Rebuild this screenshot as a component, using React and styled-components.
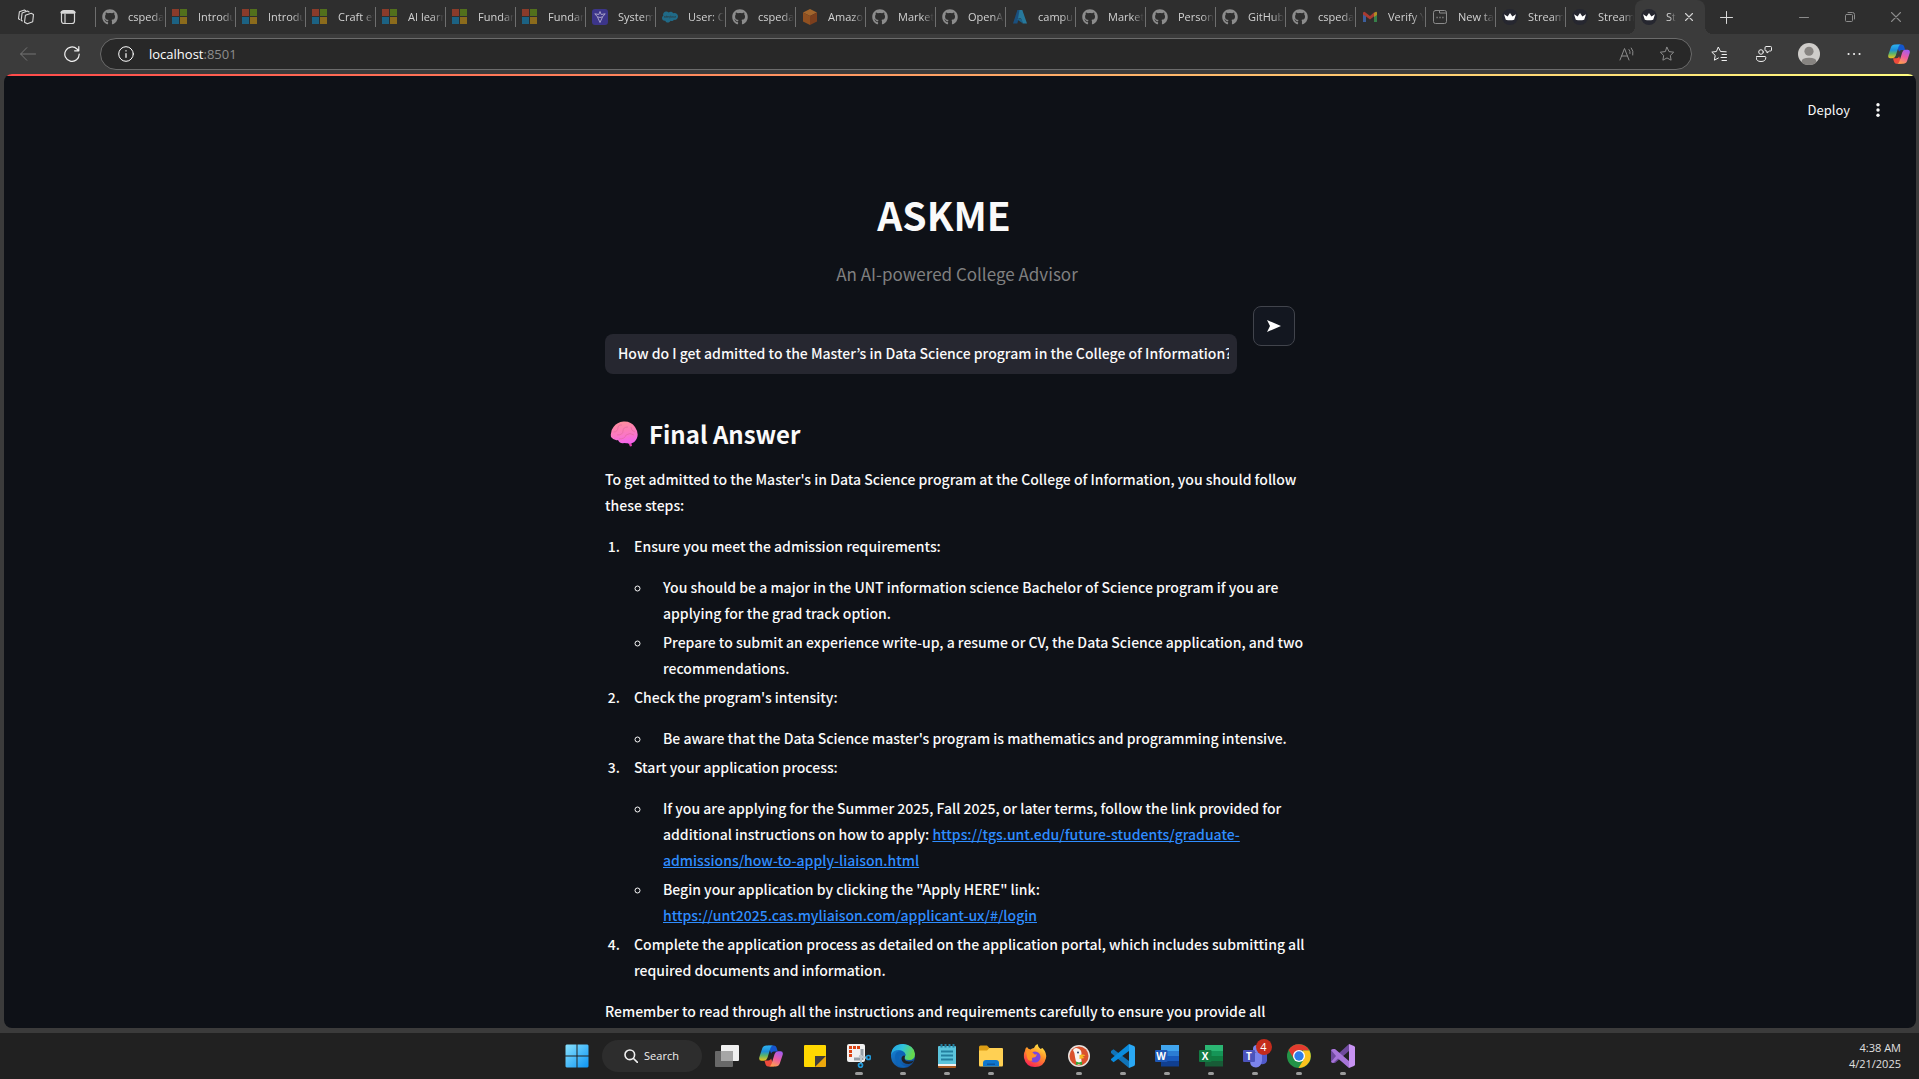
import React, { useId } from "react";
import styled, { createGlobalStyle } from "styled-components";
import { FaGithub, FaSalesforce } from "react-icons/fa";

const sourceSans = '"Source Sans Pro", "Noto Sans CJK KR", sans-serif';
const systemSans = '"Segoe UI", "Open Sans", "Noto Sans", sans-serif';

const GlobalStyle = createGlobalStyle`
  *, *::before, *::after { box-sizing: border-box; }
  body { margin: 0; background: #3b3b3b; overflow: hidden; }
  button { border: 0; padding: 0; background: none; color: inherit; font: inherit; }
  svg { display: block; flex: none; }
`;

/* ---------- Window ---------- */

const Screen = styled.div`
  display: flex;
  flex-direction: column;
  height: 100vh;
  font-family: ${systemSans};
  color: #fff;
`;

const TabBar = styled.header`
  display: flex;
  flex: none;
  height: 34px;
  background: #2e2e2e;
`;

const TabBarActions = styled.div`
  display: flex;
  width: 95px;
  padding-left: 5px;
`;

const BarButton = styled.button`
  display: flex;
  align-items: center;
  justify-content: center;
  width: ${(p) => p.$width || 42}px;
  height: 34px;
  color: ${(p) => p.$color || "#d8d8d8"};
`;

const TabList = styled.nav`
  display: flex;
  flex: 1;
  min-width: 0;
`;

const Tab = styled.button`
  position: relative;
  display: flex;
  align-items: center;
  gap: 10px;
  width: 70px;
  padding: 0 1px 0 7px;
  color: #d2d2d2;
  font-size: 11px;
  line-height: 16px;

  &::before {
    content: "";
    position: absolute;
    left: 0;
    top: 7px;
    width: 1px;
    height: 20px;
    background: #6e6e6e;
  }
`;

const TabIcon = styled.span`
  display: flex;
  align-items: center;
  justify-content: center;
  flex: none;
  width: 16px;
  height: 16px;
  color: #8c8c8c;
`;

const TabTitle = styled.span`
  flex: 1;
  overflow: hidden;
  white-space: nowrap;
  text-align: left;
  mask-image: linear-gradient(90deg, #000 calc(100% - ${(p) => p.$fade || 12}px), transparent);
`;

const ActiveTab = styled.div`
  position: relative;
  display: flex;
  align-items: center;
  gap: 9px;
  width: 70px;
  padding: 0 12px 0 6px;
  border-radius: 8px 8px 0 0;
  background: #3b3b3b;
  color: #d2d2d2;
  font-size: 11px;
  line-height: 16px;

  &::before, &::after {
    content: "";
    position: absolute;
    bottom: 0;
    width: 8px;
    height: 8px;
  }
  &::before {
    left: -8px;
    background: radial-gradient(circle at 0 0, #2e2e2e 8px, #3b3b3b 8px);
  }
  &::after {
    right: -8px;
    background: radial-gradient(circle at 100% 0, #2e2e2e 8px, #3b3b3b 8px);
  }
`;

const WindowControls = styled.div`
  display: flex;
`;

const Toolbar = styled.div`
  display: flex;
  align-items: center;
  flex: none;
  height: 40px;
  padding: 0 2px 0 6px;
`;

const AddressBar = styled.form`
  display: flex;
  align-items: center;
  flex: 1;
  height: 32px;
  margin: 0 9px 0 6px;
  padding: 0 4px 0 17px;
  border: 1px solid #6b6b6b;
  border-radius: 16px;
  background: #282828;
`;

const Address = styled.div`
  flex: 1;
  margin-left: 15px;
  color: #8d8d8d;
  font-size: 13px;
  line-height: 20px;
`;

const Host = styled.span`
  color: #fff;
`;

const ToolbarActions = styled.div`
  display: flex;
  gap: 9px;
`;

/* ---------- Page ---------- */

const Page = styled.main`
  flex: 1;
  min-height: 0;
  margin: 0 3px 0 4px;
  overflow: hidden;
  border-radius: 8px;
  background: #0e1117;
  color: #fafafa;
  font-family: ${sourceSans};
  font-size: 14px;
  font-weight: 500;
  line-height: 26px;
`;

const Decoration = styled.div`
  height: 2px;
  background: linear-gradient(90deg, #ff4b4b, #fffd80);
`;

const PageHeader = styled.div`
  display: flex;
  align-items: center;
  justify-content: flex-end;
  gap: 20px;
  height: 68px;
  padding-right: 30px;
`;

const DeployButton = styled.button`
  font-size: 13px;
  font-weight: 400;
  line-height: 20px;
`;

const Scroller = styled.div`
  padding-right: 6px;
`;

const Column = styled.div`
  max-width: 704px;
  margin: 0 auto;
  padding-top: 44px;
`;

const Title = styled.h1`
  margin: 0;
  padding-right: 26px;
  font-size: 39px;
  font-weight: 700;
  line-height: 53px;
  text-align: center;
`;

const Subtitle = styled.p`
  margin: 19px 0 18px;
  color: #808080;
  font-size: 17px;
  font-weight: 400;
  line-height: 28px;
  text-align: center;
`;

const Ask = styled.form`
  display: flex;
  gap: 16px;
  height: 68px;
`;

const Question = styled.input`
  flex: 1;
  align-self: flex-end;
  min-width: 0;
  height: 40px;
  padding: 0 8px 2px 13px;
  border: 0;
  border-radius: 8px;
  outline: 0;
  background: #262730;
  color: #fafafa;
  font: inherit;
`;

const SendSlot = styled.div`
  width: 56px;
`;

const SendButton = styled.button`
  display: flex;
  align-items: center;
  justify-content: center;
  width: 42px;
  height: 40px;
  border: 1px solid #41444c;
  border-radius: 8px;
  background: #131720;
`;

const AnswerTitle = styled.h3`
  display: flex;
  align-items: center;
  gap: 11px;
  margin: 43px 0 15px;
  padding-left: 5px;
  font-size: 24px;
  font-weight: 600;
  line-height: 34px;
`;

const Paragraph = styled.p`
  margin: 0 0 15px;
`;

const Steps = styled.ol`
  margin: 0 0 15px;
  padding: 0;
`;

const Details = styled.ul`
  margin: 15px 0 0;
  padding: 0;
  list-style: circle;
`;

const Item = styled.li`
  margin: 3px 0 0 18px;
  padding-left: 11px;
  &:first-child { margin-top: 0; }
`;

const Link = styled.a`
  color: #2f8dff;
  text-decoration: underline;
`;

/* ---------- Taskbar ---------- */

const Taskbar = styled.footer`
  display: grid;
  grid-template-columns: 1fr auto 1fr;
  flex: none;
  height: 46px;
  margin-top: 5px;
  background: #212121;
`;

const Dock = styled.div`
  grid-column: 2;
  display: flex;
  align-items: center;
`;

const DockButton = styled.button`
  position: relative;
  display: flex;
  align-items: center;
  justify-content: center;
  width: 44px;
  height: 46px;

  &::after {
    content: "";
    position: absolute;
    bottom: 4px;
    width: ${(p) => p.$mark || 0}px;
    height: 3px;
    border-radius: 2px;
    background: #9b9b9b;
  }
`;

const Search = styled.button`
  display: flex;
  align-items: center;
  justify-content: center;
  gap: 6px;
  width: 100px;
  height: 32px;
  margin: 0 3px;
  border-radius: 16px;
  background: #2d2d2d;
  color: #f0f0f0;
  font-size: 11px;
  font-weight: 500;
  line-height: 16px;
`;

const Badge = styled.span`
  position: absolute;
  top: 6px;
  right: 5px;
  width: 16px;
  height: 16px;
  border-radius: 8px;
  background: #c42b1c;
  font-size: 11px;
  line-height: 16px;
  text-align: center;
`;

const Clock = styled.time`
  justify-self: end;
  align-self: center;
  padding-right: 18px;
  color: #e0e0e0;
  font-size: 11px;
  line-height: 16px;
  text-align: right;
`;

/* ---------- Icons ---------- */

const Line = ({ size = 16, box = 16, width = 1, children }) => (
  <svg width={size} height={size} viewBox={`0 0 ${box} ${box}`} fill="none" stroke="currentColor" strokeWidth={width} strokeLinecap="round" strokeLinejoin="round" aria-hidden="true">
    {children}
  </svg>
);

const Art = ({ size = 24, box = 24, children }) => (
  <svg width={size} height={size} viewBox={`0 0 ${box} ${box}`} aria-hidden="true">{children}</svg>
);

const WorkspacesIcon = () => (
  <Line width={1.1}>
    <path d="m7.400 6.200 5.800-2 2.300 1.200-.8 7.400-5.400 2-2.800-1.600z" />
    <path d="m4.300 12-1.100-.700.900-7.400 5.400-1.900 1.600 1" />
    <path d="m1.700 10.400-1.200-.7.900-7 5-1.700 1.300.7" />
  </Line>
);
const TabPanelIcon = () => (
  <Line width={1.2}><rect x="1.500" y="1.500" width="13" height="13" rx="2.500" /><path d="M2 3.200h12" strokeWidth="3" /><path d="M5 5v9" /></Line>
);
const CloseIcon = ({ size = 8 }) => <Line size={size} box={8} width={1.1}><path d="m.5.5 7 7m0-7-7 7" /></Line>;

const MicrosoftIcon = () => (
  <Art size={16} box={16}>
    <path fill="#8a3b2a" d="M0 0h7v7H0z" /><path fill="#52701c" d="M8 0h7v7H8z" />
    <path fill="#1c6283" d="M0 8h7v7H0z" /><path fill="#8b6b1c" d="M8 8h7v7H8z" />
  </Art>
);
const SystemIcon = () => (
  <Art size={16} box={16}>
    <rect width="16" height="16" rx="3" fill="#3c3589" />
    <path fill="none" stroke="#a7a1c8" strokeWidth="1" strokeLinejoin="round" d="m8 2.500 1.200 3 4-.7-2.600 3L8 13.500 5.400 7.800l-2.600-3 4 .7zM5.400 7.800 8 8.500l2.600-.700" />
  </Art>
);
const AmazonIcon = () => (
  <Art size={16} box={16}>
    <path fill="#a2652c" d="m8 0 7 3.500L8 7 1 3.500z" /><path fill="#905020" d="M1 3.500 8 7v9l-7-3.500z" /><path fill="#7c3f1d" d="m15 3.500-7 3.500v9l7-3.500z" />
  </Art>
);
const AzureIcon = () => (
  <Art size={16} box={16}>
    <path fill="#1a4f7d" d="M5.400 1h4.200L5.300 14.500H1z" /><path fill="#27789b" d="M7.500 1h2.800L15 14.500h-4.200L9 9.500H6z" /><path fill="#1c628b" d="M4.500 10h5l1.500 4.500z" />
  </Art>
);
const GmailIcon = () => (
  <Art size={16} box={16}>
    <path fill="#3c5e9c" d="M1 4h3v9H1z" /><path fill="#378049" d="M12 6h3v7h-3z" /><path fill="#a93a31" d="m1 3.500 1.500-.8L8 7l4.500-4v4L8 10.500 4 7.500 1 5.500z" /><path fill="#b08c25" d="M12 4q3-2.500 3 0v2l-3 2z" />
  </Art>
);
const NewTabIcon = () => (
  <Line size={16}><rect x="1.500" y="1.500" width="13" height="13" rx="2" /><path d="M7.500 1.500V4h7" /><path d="M4.500 8.500h1.200m1.700 0h1.200m1.700 0h1.200" strokeWidth="1.600" strokeLinecap="butt" /></Line>
);
const CrownIcon = () => (
  <Art size={16} box={16}>
    <circle cx="8" cy="8" r="8" fill="#262730" /><path fill="#fff" d="m2 5.200 3.600 2.300L8 4l2.400 3.500L14 5.200l-1.800 5.500q-4.200 1-8.400 0z" />
  </Art>
);

const CopilotIcon = ({ size = 24 }) => {
  const id = useId();
  return (
    <Art size={size}>
      <defs>
        <linearGradient id={`${id}a`} x1="0" y1="0" x2="0" y2="1"><stop stopColor="#2fb2ee" /><stop offset=".4" stopColor="#1c8ed8" /><stop offset=".65" stopColor="#57b36d" /><stop offset="1" stopColor="#f2c31b" /></linearGradient>
        <linearGradient id={`${id}b`} x1=".7" y1="0" x2=".3" y2="1"><stop stopColor="#a45cf0" /><stop offset=".5" stopColor="#ee5da0" /><stop offset="1" stopColor="#ffa04e" /></linearGradient>
      </defs>
      <path fill="#1456ce" d="M9 1.500h6q1.800 0 2.500 2l1.300 4h-4q-2 0-2.700 2z" />
      <path fill="#ee4a3b" d="M15 22.500H9q-1.700 0-2.400-2l-1.200-4h4q2 0 2.700-2z" />
      <path fill={`url(#${id}a)`} d="M7.500 1.500H14q-1.800.2-2.500 2.500L8.400 14q-.9 2.700-3.500 2.700H2.500q-3 0-2.200-3.500L3.200 4.500q1-3 4.300-3z" />
      <path fill={`url(#${id}b)`} d="M16.500 22.500H10q1.800-.2 2.500-2.500L15.600 10q.9-2.700 3.500-2.700h2.400q3 0 2.200 3.500l-2.900 8.700q-1 3-4.300 3z" />
    </Art>
  );
};

const starPath = "m8 1.300 2 4.300 4.700.6-3.400 3.300.8 4.700L8 11.900l-4.100 2.300.8-4.700L1.300 6.200 6 5.600z";

const StartIcon = () => (
  <Art>
    <defs><linearGradient id="start" x1="0" y1="0" x2="24" y2="24" gradientUnits="userSpaceOnUse"><stop stopColor="#8be3fd" /><stop offset="1" stopColor="#0a93f5" /></linearGradient></defs>
    <path fill="url(#start)" d="M.5 1.500 1.500.5h10v11h-11zM12.500.5h10l1 1v10h-11zM.5 12.500h11v11h-10l-1-1zM12.500 12.500h11v10l-1 1h-10z" />
  </Art>
);
const TaskViewIcon = () => (
  <Art><rect x="6" y="1" width="18" height="16" rx="1" fill="#f0f0f0" /><rect y="7" width="18" height="16" rx="1" fill="#686868" /><path fill="#a6a6a6" d="M6 7h12v10H6z" /></Art>
);
const StickyIcon = () => (
  <Art><path fill="#ffd800" d="M1 2q0-1 1-1h20q1 0 1 1v10L12 23H2q-1 0-1-1z" /><path fill="#3f3d3d" d="M12 12h11L12 23z" /><path fill="#eda80c" d="M23 12v10q0 1-1 1H12z" /></Art>
);
const SnipIcon = () => (
  <Art>
    <rect width="18" height="18" rx="2" fill="#f1f1f1" /><path fill="none" stroke="#dc4313" strokeWidth="3" strokeDasharray="3 1" d="M3.500 13V3.500H14" />
    <path fill="none" stroke="#979fa6" strokeWidth="3" d="M15 5v11m-8-1h8" />
    <path stroke="#bfc7cc" strokeWidth="2" d="m12 12 8 2M14 11v8" /><circle cx="21.500" cy="13.500" r="2" fill="none" stroke="#2099da" strokeWidth="1.700" /><circle cx="13.500" cy="21.300" r="2" fill="none" stroke="#2099da" strokeWidth="1.700" />
  </Art>
);
const EdgeIcon = () => (
  <Art>
    <defs>
      <linearGradient id="edgeTop" x1="0" x2="1" y2=".3"><stop stopColor="#239ee4" /><stop offset=".5" stopColor="#2fc3dc" /><stop offset="1" stopColor="#65d94c" /></linearGradient>
      <linearGradient id="edgeBase" x1="0" x2=".8" y2="1"><stop stopColor="#1688dd" /><stop offset="1" stopColor="#114a95" /></linearGradient>
    </defs>
    <circle cx="12" cy="12" r="12" fill="url(#edgeBase)" />
    <path fill="url(#edgeTop)" d="M0 11Q1 0 12 0q11 1 12 10 0 6-6 6-6-.3-4-3.500 1-1.500 0-3Q12 6 8 6 2 6 0 11z" />
    <path fill="#0c64b8" d="M4 13q0-6 6-6 4 .5 4.500 4l-1 2q-1-2.500-3.500-2-3.500 2-1 7 3 5 8 4.500Q5 26 4 13z" />
    <path fill="#212121" d="M14 12q-2 5 4 5.500 3 0 5-1-1.500 3-5 3.500-7 0-7.500-5 0-3.500 3-3.500z" />
  </Art>
);
const NotepadIcon = () => (
  <Art>
    <rect x="3" y="2" width="18" height="21" rx="1" fill="#5bc4dc" /><path fill="#a95a21" d="M3 21h18v2q0 1-1 1H4q-1 0-1-1z" /><path fill="#f1f1f1" d="M3 20h18v2H3z" />
    <path stroke="#237f9f" strokeWidth="2" d="M6.500 0v3.500m4-3.500v3.500m4-3.500v3.500m4-3.500v3.500M6 7.500h12M6 11.500h12M6 15.500h12" />
  </Art>
);
const ExplorerIcon = () => (
  <Art>
    <path fill="#dc9d14" d="M0 3q0-1.500 1.500-1.500H8L10.500 4H22v5H0z" /><path fill="#ffd053" d="M0 6.500h8L10.500 4H23q1 0 1 1v16q0 1.500-1 1.500H1q-1 0-1-1.500z" />
    <path fill="#0f77cd" d="M4 22.500V19q0-3 3-3h10q3 0 3 3v3.500z" /><path fill="#0c559d" d="M8 19.500h8v1.500H8z" />
  </Art>
);
const FirefoxIcon = () => (
  <Art>
    <defs><linearGradient id="fox" x1=".8" x2=".3" y2="1"><stop stopColor="#fff04a" /><stop offset=".45" stopColor="#ff9328" /><stop offset="1" stopColor="#fb2055" /></linearGradient></defs>
    <path fill="url(#fox)" d="M4 3q1 2 3.500 2.500Q9 4 11 4q1-3 3.500-4 .5 3 3 5l2-1q4.500 5 3.500 10-2 9-11 9T1 14Q.5 9 2 7q0-3 2-4z" />
    <circle cx="12" cy="13" r="5.500" fill="#7947de" /><path fill="#ff9425" d="M3 7q5-1 8 3 1.500 1 3 0-1 4-4 3.500-2 1-.5 3Q5 18 4 13z" />
  </Art>
);
const DuckIcon = () => (
  <Art>
    <circle cx="12" cy="12" r="11" fill="#e9e2df" /><circle cx="12" cy="12" r="9.500" fill="#da522c" /><path fill="#f8f6f4" d="M6 6q2-3 5-1.500 3.500 1 3.500 5l-.5 4 1 6q-3 2-5.500.5L8 13q0-4-2-7z" />
    <path fill="#f6ba23" d="M12.500 11q4-1 6 .5l-3 1 2 1.500-5 1z" /><path fill="#37a635" d="m9 17.500 3 1 3-1v3.500l-3-1-3 1z" /><circle cx="11" cy="8.500" r="1" fill="#274169" />
  </Art>
);
const VSCodeIcon = () => (
  <Art><path fill="#1174b8" d="m0 7 2.500-1.800L18 17v7L0 9z" /><path fill="#0a8bdc" d="m0 16 2.500 2.300L18 7V0L0 15z" /><path fill="#2aa8f4" d="m18 0 5 2q1 .5 1 2v16q0 1.500-1 2l-5 2z" /></Art>
);
const OfficeIcon = ({ letter, tones }) => (
  <Art>
    <path fill={tones[0]} d="M6 1h18v6H6z" /><path fill={tones[1]} d="M6 7h18v5H6z" /><path fill={tones[2]} d="M6 12h18v5H6z" /><path fill={tones[3]} d="M6 17h18v5.500H6z" />
    <rect y="6" width="12.500" height="12" rx="1" fill={tones[4]} />
    <text x="6" y="16" fill="#fff" fontSize="10" fontWeight="700" textAnchor="middle">{letter}</text>
  </Art>
);
const TeamsIcon = () => (
  <Art>
    <circle cx="14" cy="5" r="4" fill="#7b83eb" /><path fill="#5059c9" d="M17 9h7v8q-2 4-6 3z" /><path fill="#7b83eb" d="M7 9h12v8q-1 6-6 6.500Q7 23 7 17z" />
    <rect y="6" width="12" height="12" rx="1" fill="#4b53bc" /><text x="6" y="15.500" fill="#fff" fontSize="10" fontWeight="700" textAnchor="middle">T</text>
  </Art>
);
const ChromeIcon = () => (
  <Art>
    <circle cx="12" cy="12" r="12" fill="#239447" /><path fill="#e33b2e" d="M1.600 6A12 12 0 0 1 22.400 6.500H12L7 15z" /><path fill="#fcc31e" d="M22.400 6.500A12 12 0 0 1 11.500 24L17 15l-1-8.500z" />
    <circle cx="12" cy="12" r="6" fill="#fff" /><circle cx="12" cy="12" r="4.700" fill="#2f7de9" />
  </Art>
);
const VisualStudioIcon = () => (
  <Art><path fill="#6e4a9c" d="m0 6 2-1 5 5 11-10v7L4 19l-2 0-2-1z" /><path fill="#a775d8" d="m0 18 2 1 5-4.500L18 24v-7L4 5 2 5 0 6l5 6z" /><path fill="#c792f2" d="m18 0 5 2 1 1v18l-1 1-5 2z" /></Art>
);

const BrainIcon = () => (
  <svg width="28" height="26" viewBox="0 0 28 26" aria-hidden="true">
    <defs><linearGradient id="brain" x1=".4" x2=".6" y2="1"><stop stopColor="#ff8e9c" /><stop offset=".6" stopColor="#fb77c5" /><stop offset="1" stopColor="#f464ee" /></linearGradient></defs>
    <path fill="#dd3fae" d="m17 21 4-1 1 5-2 .500q-.5-2.500-3-4.500z" />
    <path fill="url(#brain)" d="M1 16Q0 10 3.500 6 7 1 13.500.500 21 0 25 6q4 6 2 11-2 5-7 5.500l-6-.5q-4 1-6-3-4 1-7-3z" />
    <path fill="none" stroke="#e56a9f" strokeWidth=".7" d="M3.500 11Q8 11 8 6q1-3 4-2M7 14q6 0 6-4t5-4m-9 12q6 0 7-4 4-3 8 0m-3-8q0 4 4 5" />
  </svg>
);

/* ---------- Content ---------- */

const tabs = [
  ["cspeda", "github"], ["Introdu", "ms"], ["Introdu", "ms"], ["Craft ef", "ms"], ["AI learn", "ms"], ["Fundar", "ms"], ["Fundar", "ms"],
  ["System", "system"], ["User: C", "cloud"], ["cspeda", "github"], ["Amazo", "amazon"], ["Market", "github"], ["OpenA", "github"],
  ["campu", "azure"], ["Market", "github"], ["Person", "github"], ["GitHub", "github"], ["cspeda", "github"], ["Verify Y", "gmail"],
  ["New ta", "newtab"], ["Stream", "crown"], ["Stream", "crown"],
];

const favicons = {
  github: <FaGithub size={16} />, ms: <MicrosoftIcon />, system: <SystemIcon />, cloud: <FaSalesforce size={16} color="#206a87" />,
  amazon: <AmazonIcon />, azure: <AzureIcon />, gmail: <GmailIcon />, newtab: <NewTabIcon />, crown: <CrownIcon />,
};

const apps = [
  ["Task view", <TaskViewIcon />], ["Copilot", <CopilotIcon />], ["Sticky Notes", <StickyIcon />], ["Snipping Tool", <SnipIcon />, 8],
  ["Edge", <EdgeIcon />, 6], ["Notepad", <NotepadIcon />, 6], ["File Explorer", <ExplorerIcon />, 6], ["Firefox", <FirefoxIcon />],
  ["DuckDuckGo", <DuckIcon />, 6], ["Visual Studio Code", <VSCodeIcon />, 6],
  ["Word", <OfficeIcon letter="W" tones={["#41a5ee", "#2b7cd3", "#185abd", "#103f91", "#1d57b5"]} />, 6],
  ["Excel", <OfficeIcon letter="X" tones={["#2bb673", "#159557", "#107c41", "#185c37", "#137b43"]} />, 6],
  ["Teams", <TeamsIcon />, 6, "4"], ["Chrome", <ChromeIcon />, 6], ["Visual Studio", <VisualStudioIcon />, 6],
];

function Browser() {
  return (
    <>
      <TabBar>
        <TabBarActions>
          <BarButton aria-label="Workspaces"><WorkspacesIcon /></BarButton>
          <BarButton aria-label="Tab actions"><TabPanelIcon /></BarButton>
        </TabBarActions>
        <TabList aria-label="Tabs">
          {tabs.map(([title, icon], i) => (
            <Tab key={i}><TabIcon>{favicons[icon]}</TabIcon><TabTitle>{title}</TabTitle></Tab>
          ))}
          <ActiveTab>
            <TabIcon><CrownIcon /></TabIcon><TabTitle $fade={6}>St</TabTitle>
            <button aria-label="Close tab"><CloseIcon /></button>
          </ActiveTab>
          <BarButton aria-label="New tab"><Line size={13} box={13}><path d="M6.500.500v12M.5 6.500h12" /></Line></BarButton>
        </TabList>
        <WindowControls>
          <BarButton $width={46} $color="#8c8c8c" aria-label="Minimize"><Line size={10} box={10}><path d="M.5 5.500h9" /></Line></BarButton>
          <BarButton $width={46} $color="#8c8c8c" aria-label="Restore"><Line size={10} box={10}><rect x=".5" y="2.500" width="7" height="7" rx="1" /><path d="M3 .5h4.500q2 0 2 2V7" /></Line></BarButton>
          <BarButton $width={46} $color="#8c8c8c" aria-label="Close"><CloseIcon size={10} /></BarButton>
        </WindowControls>
      </TabBar>
      <Toolbar>
        <BarButton $width={44} $color="#757575" aria-label="Back"><Line><path d="M15.500 8H.8m6-6.300L.6 8l6.200 6.300" /></Line></BarButton>
        <BarButton $width={44} $color="#f0f0f0" aria-label="Refresh"><Line width={1.200}><path d="M15.200 8A7.200 7.200 0 1 1 13 3l1.700 1.700M14.800.600v4.200h-4.200" /></Line></BarButton>
        <AddressBar>
          <Line><circle cx="8" cy="8" r="7.300" /><path d="M8 7.500v3.800M8 4.700v.3" strokeWidth="1.200" /></Line>
          <Address><Host>localhost</Host>:8501</Address>
          <BarButton type="button" $width={40} $color="#8c8c8c" aria-label="Read aloud"><Line><path d="M1 14 5.500 2.500 10 14M2.600 10h5.800M10 3.500q1.500 1.500 1 4M12.300 2q2.500 3 1.500 7" /></Line></BarButton>
          <BarButton type="button" $width={40} $color="#8c8c8c" aria-label="Add to favorites"><Line><path d={starPath} /></Line></BarButton>
        </AddressBar>
        <ToolbarActions>
          <BarButton $width={36} $color="#f0f0f0" aria-label="Favorites"><Line><path d="M15.200 5.800 9.500 5.500 7.300 1 5.400 5.500.8 6.100 4.200 9.400l-.8 4.800 4-2.200M11 8.500h4.500M10 11.500h5.500M11 14.500h4.500" /></Line></BarButton>
          <BarButton $width={36} $color="#f0f0f0" aria-label="Share"><Line><circle cx="5" cy="6" r="2.300" /><path d="M1 10.500h8q.8 0 .8 1 0 4-4.800 4t-4.800-4q0-1 .8-1zM9 1.500q0-1 1-1h4.500q1 0 1 1V4q0 1-1 1h-1l-2.500 2V5H10q-1 0-1-1z" /></Line></BarButton>
          <BarButton $width={36} aria-label="Profile"><Art size={22}><circle cx="12" cy="12" r="12" fill="#cfcdca" /><circle cx="12" cy="9" r="5" fill="#878481" /><path fill="#878481" d="M4 20q0-4 8-4t8 4-8 4-8-4z" /></Art></BarButton>
          <BarButton $width={36} $color="#f0f0f0" aria-label="Settings"><Line><path d="M2.500 8h.1M8 8h.1M13.500 8h.1" strokeWidth="2" /></Line></BarButton>
          <BarButton $width={36} aria-label="Copilot"><CopilotIcon size={22} /></BarButton>
        </ToolbarActions>
      </Toolbar>
    </>
  );
}

function Answer() {
  return (
    <section>
      <AnswerTitle><BrainIcon />Final Answer</AnswerTitle>
      <Paragraph>To get admitted to the Master's in Data Science program at the College of Information, you should follow these steps:</Paragraph>
      <Steps>
        <Item>
          Ensure you meet the admission requirements:
          <Details>
            <Item>You should be a major in the UNT information science Bachelor of Science program if you are applying for the grad track option.</Item>
            <Item>Prepare to submit an experience write-up, a resume or CV, the Data Science application, and two recommendations.</Item>
          </Details>
        </Item>
        <Item>
          Check the program's intensity:
          <Details>
            <Item>Be aware that the Data Science master's program is mathematics and programming intensive.</Item>
          </Details>
        </Item>
        <Item>
          Start your application process:
          <Details>
            <Item>
              If you are applying for the Summer 2025, Fall 2025, or later terms, follow the link provided for additional instructions on how to apply:{" "}
              <Link href="https://tgs.unt.edu/future-students/graduate-admissions/how-to-apply-liaison.html">https://tgs.unt.edu/future-students/graduate-admissions/how-to-apply-liaison.html</Link>
            </Item>
            <Item>
              Begin your application by clicking the "Apply HERE" link:{" "}
              <Link href="https://unt2025.cas.myliaison.com/applicant-ux/#/login">https://unt2025.cas.myliaison.com/applicant-ux/#/login</Link>
            </Item>
          </Details>
        </Item>
        <Item>Complete the application process as detailed on the application portal, which includes submitting all required documents and information.</Item>
      </Steps>
      <Paragraph>Remember to read through all the instructions and requirements carefully to ensure you provide all</Paragraph>
    </section>
  );
}

export default function App() {
  return (
    <Screen>
      <GlobalStyle />
      <Browser />
      <Page>
        <Decoration />
        <PageHeader>
          <DeployButton>Deploy</DeployButton>
          <button aria-label="Main menu"><Art size={16} box={16}><circle cx="8" cy="2.800" r="1.700" fill="#fafafa" /><circle cx="8" cy="8" r="1.700" fill="#fafafa" /><circle cx="8" cy="13.200" r="1.700" fill="#fafafa" /></Art></button>
        </PageHeader>
        <Scroller>
          <Column>
            <Title>ASKME</Title>
            <Subtitle>An AI-powered College Advisor</Subtitle>
            <Ask onSubmit={(e) => e.preventDefault()}>
              <Question type="text" aria-label="Question" defaultValue="How do I get admitted to the Master’s in Data Science program in the College of Information?" />
              <SendSlot>
                <SendButton aria-label="Send"><Art size={14} box={14}><path fill="#fff" d="m0 1 14 6L0 13l3-6z" /></Art></SendButton>
              </SendSlot>
            </Ask>
            <Answer />
          </Column>
        </Scroller>
      </Page>
      <Taskbar>
        <Dock>
          <DockButton aria-label="Start"><StartIcon /></DockButton>
          <Search><Line size={14} box={14} width={1.600}><circle cx="5.800" cy="5.800" r="4.800" /><path d="m9.500 9.500 4 4" /></Line>Search</Search>
          {apps.map(([name, icon, mark, count]) => (
            <DockButton key={name} aria-label={name} $mark={mark}>{icon}{count && <Badge>{count}</Badge>}</DockButton>
          ))}
        </Dock>
        <Clock>4:38 AM<br />4/21/2025</Clock>
      </Taskbar>
    </Screen>
  );
}
